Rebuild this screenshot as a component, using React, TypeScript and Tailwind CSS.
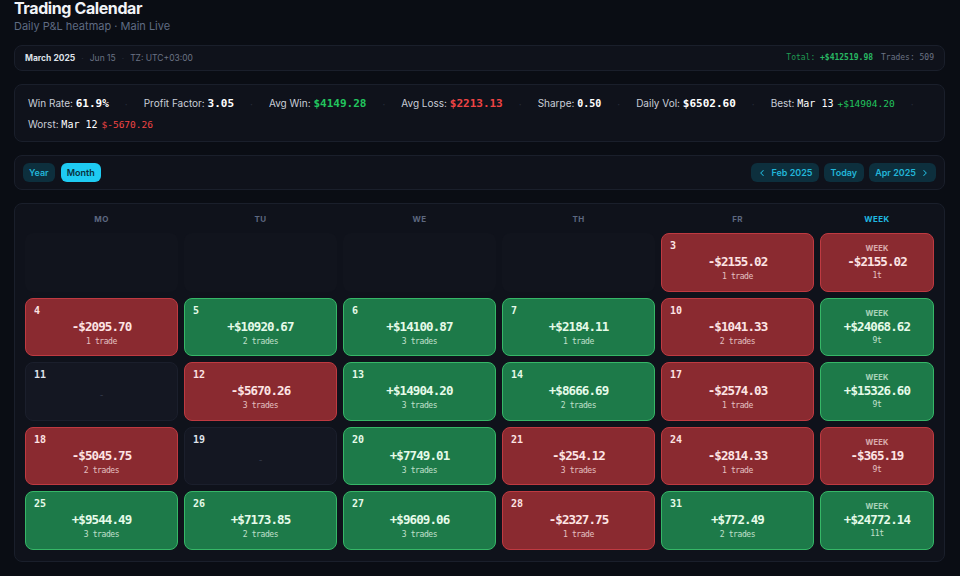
import React from 'react';
import { ChevronLeft, ChevronRight } from 'lucide-react';

type Day = { d: number; pnl?: number; trades?: number } | null;
type Week = { days: Day[]; pnl: number; trades: number };

const weeks: Week[] = [
  { days: [null, null, null, null, { d: 3, pnl: -2155.02, trades: 1 }], pnl: -2155.02, trades: 1 },
  {
    days: [
      { d: 4, pnl: -2095.7, trades: 1 },
      { d: 5, pnl: 10920.67, trades: 2 },
      { d: 6, pnl: 14100.87, trades: 3 },
      { d: 7, pnl: 2184.11, trades: 1 },
      { d: 10, pnl: -1041.33, trades: 2 },
    ],
    pnl: 24068.62,
    trades: 9,
  },
  {
    days: [
      { d: 11 },
      { d: 12, pnl: -5670.26, trades: 3 },
      { d: 13, pnl: 14904.2, trades: 3 },
      { d: 14, pnl: 8666.69, trades: 2 },
      { d: 17, pnl: -2574.03, trades: 1 },
    ],
    pnl: 15326.6,
    trades: 9,
  },
  {
    days: [
      { d: 18, pnl: -5045.75, trades: 2 },
      { d: 19 },
      { d: 20, pnl: 7749.01, trades: 3 },
      { d: 21, pnl: -254.12, trades: 3 },
      { d: 24, pnl: -2814.33, trades: 1 },
    ],
    pnl: -365.19,
    trades: 9,
  },
  {
    days: [
      { d: 25, pnl: 9544.49, trades: 3 },
      { d: 26, pnl: 7173.85, trades: 2 },
      { d: 27, pnl: 9609.06, trades: 3 },
      { d: 28, pnl: -2327.75, trades: 1 },
      { d: 31, pnl: 772.49, trades: 2 },
    ],
    pnl: 24772.14,
    trades: 11,
  },
];

const fmt = (v: number) => (v < 0 ? '-' : '+') + '$' + Math.abs(v).toFixed(2);

const mono = "font-['DejaVu_Sans_Mono',monospace]";

const tone = (v: number) =>
  v < 0
    ? 'bg-[#8a2a30] border-[#bf3a41] text-[#fde4e4]'
    : 'bg-[#1d7a49] border-[#36b767] text-[#e6fbe9]';

const Sep = () => <span className="text-[#262c3a]">·</span>;

const StatsBar: React.FC = () => (
  <div className="mt-[13px] rounded-lg border border-[#1a1f2b] bg-[#0f121b] pl-[13px] pr-3 pt-[11px] pb-[9px]">
    <div className="flex flex-wrap items-center gap-x-4 gap-y-1.5 text-[10px] leading-[14px] text-[#c9ced8]">
      <span>Win Rate: <b className={`${mono} text-[11px] text-white`}>61.9%</b></span>
      <Sep />
      <span>Profit Factor: <b className={`${mono} text-[11px] text-white`}>3.05</b></span>
      <Sep />
      <span>Avg Win: <b className={`${mono} text-[11px] text-[#22c55e]`}>$4149.28</b></span>
      <Sep />
      <span>Avg Loss: <b className={`${mono} text-[11px] text-[#ef4444]`}>$2213.13</b></span>
      <Sep />
      <span>Sharpe: <b className={`${mono} text-[10px] text-white`}>0.50</b></span>
      <Sep />
      <span>Daily Vol: <b className={`${mono} text-[11px] text-white`}>$6502.60</b></span>
      <Sep />
      <span>
        Best: <span className={`${mono} text-[10px] text-white`}>Mar 13</span>
        <span className={`${mono} ml-1 text-[9.5px] text-[#22c55e]`}>+$14904.20</span>
      </span>
      <Sep />
      <span>
        Worst: <span className={`${mono} text-[10px] text-white`}>Mar 12</span>
        <span className={`${mono} ml-1 text-[9.5px] text-[#ef4444]`}>$-5670.26</span>
      </span>
    </div>
  </div>
);

const DayCell: React.FC<{ day: Day }> = ({ day }) => {
  if (!day) return <div className="h-[58.5px] rounded-lg bg-[#11141d]" />;
  if (day.pnl === undefined) {
    return (
      <div className="flex h-[58.5px] flex-col rounded-lg border border-[#1b1f2c] bg-[#141722] pl-2 pt-[6px]">
        <span className={`${mono} text-[10px] font-bold leading-3 text-[#dfe3ea]`}>{day.d}</span>
        <span className="mt-[7px] pr-2 text-center text-[8px] leading-[14px] text-[#3b4254]">-</span>
      </div>
    );
  }
  return (
    <div className={`flex h-[58.5px] flex-col rounded-lg border pl-2 pt-[6px] ${tone(day.pnl)}`}>
      <span className={`${mono} text-[10px] font-bold leading-3`}>{day.d}</span>
      <span className={`${mono} mt-[3px] pr-2 text-center text-[12.5px] font-bold leading-[14px] tracking-[-0.9px]`}>
        {fmt(day.pnl)}
      </span>
      <span className={`${mono} mt-[3px] pr-2 text-center text-[8px] leading-[10px] tracking-[-0.4px] opacity-80`}>
        {day.trades} {day.trades === 1 ? 'trade' : 'trades'}
      </span>
    </div>
  );
};

const WeekCell: React.FC<{ w: Week }> = ({ w }) => (
  <div className={`flex h-[58.5px] flex-col items-center rounded-lg border pt-[10px] ${tone(w.pnl)}`}>
    <span className="text-[7.5px] font-bold leading-[10px] tracking-wide opacity-70">WEEK</span>
    <span className={`${mono} mt-px text-[12.5px] font-bold leading-[14px] tracking-[-0.9px]`}>{fmt(w.pnl)}</span>
    <span className={`${mono} mt-[2px] text-[8px] leading-[10px] tracking-[-0.4px] opacity-80`}>{w.trades}t</span>
  </div>
);

export default function App() {
  return (
    <div className="min-h-screen bg-[#0a0d14] pl-3.5 pr-[15px] font-['Inter',sans-serif] text-white">
      <h1 className="text-[16px] font-bold leading-4 tracking-tight text-[#f1f3f7]">Trading Calendar</h1>
      <p className="mt-[3px] text-[11px] leading-[14px] text-[#5f6b82]">Daily P&amp;L heatmap · Main Live</p>

      <div className="mt-3 flex flex-col">
        <div className="flex h-[26px] items-center justify-between rounded-lg border border-[#1a1f2b] bg-[#0f121b] px-2.5 text-[8.5px]">
          <div className="flex items-center gap-1.5 text-[#6b7384]">
            <span className="font-bold text-[#dde1e8]">March 2025</span>
            <Sep />
            <span>Jun 15</span>
            <Sep />
            <span>TZ: UTC+03:00</span>
          </div>
          <div className={`${mono} flex items-center gap-2 text-[8px]`}>
            <span className="text-[#1f9b52]">
              Total: <span className="font-bold text-[#28b863]">+$412519.98</span>
            </span>
            <span className="text-[#6b7384]">Trades: 509</span>
          </div>
        </div>

        <StatsBar />

        <div className="mt-[13px] flex h-[35px] items-center justify-between rounded-lg border border-[#1a1f2b] bg-[#0f121b] px-2 text-[9px] font-semibold">
          <div className="flex items-center gap-1.5">
            <button className="h-[19px] rounded-md bg-[#0d2f3d] px-1.5 text-[#22b5d8]">Year</button>
            <button className="h-[19px] rounded-md bg-[#1ecbf2] px-1.5 text-[#08303d]">Month</button>
          </div>
          <div className="flex items-center gap-[5px] text-[#22b5d8]">
            <button className="flex h-[19px] items-center gap-1 rounded-md bg-[#0d2f3d] px-1.5">
              <ChevronLeft size={10} strokeWidth={2.5} /> Feb 2025
            </button>
            <button className="h-[19px] rounded-md bg-[#0d2f3d] px-[7px]">Today</button>
            <button className="flex h-[19px] items-center gap-1 rounded-md bg-[#0d2f3d] px-1.5">
              Apr 2025 <ChevronRight size={10} strokeWidth={2.5} />
            </button>
          </div>
        </div>

        <div className="mt-[13px] rounded-lg border border-[#1a1f2b] bg-[#0f121b] px-2.5 pt-[7px] pb-[11px]">
          <div className="grid grid-cols-[repeat(5,minmax(0,1fr))_114px] gap-x-1.5 gap-y-[6px]">
            {['MO', 'TU', 'WE', 'TH', 'FR'].map((d) => (
              <div key={d} className="h-4 text-center text-[8px] font-bold leading-4 tracking-wider text-[#5d6880]">
                {d}
              </div>
            ))}
            <div className="h-4 text-center text-[8px] font-bold leading-4 tracking-wider text-[#1fb8e0]">WEEK</div>
            {weeks.map((w, i) => (
              <React.Fragment key={i}>
                {w.days.map((day, j) => (
                  <DayCell key={j} day={day} />
                ))}
                <WeekCell w={w} />
              </React.Fragment>
            ))}
          </div>
        </div>
      </div>
    </div>
  );
}
